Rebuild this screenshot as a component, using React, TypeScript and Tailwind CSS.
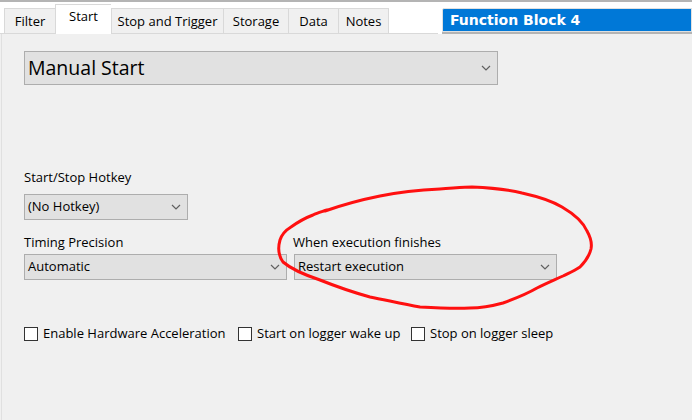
import { ReactNode } from "react";

const FONT = { fontFamily: '"Segoe UI", "Open Sans", "Noto Sans", sans-serif' };

const TABS = ["Filter", "Start", "Stop and Trigger", "Storage", "Data", "Notes"];
const TAB_W = [51, 56, 112, 65, 50, 51];

function Chevron() {
  return (
    <svg width="10" height="6" viewBox="0 0 10 6" className="shrink-0">
      <path d="M1 1 L5 5 L9 1" fill="none" stroke="#606060" strokeWidth="1.2" />
    </svg>
  );
}

function Combo({ value, className, big }: { value: string; className: string; big?: boolean }) {
  return (
    <div
      className={`flex items-center justify-between border border-[#adadad] bg-[#e1e1e1] text-black ${
        big ? "pl-[3px] pr-[6px] text-[19.5px]" : "pl-[3px] pr-[6px] text-[13px]"
      } ${className}`}
    >
      <span>{value}</span>
      <Chevron />
    </div>
  );
}

function Check({ children, className }: { children: ReactNode; className?: string }) {
  return (
    <label className={`flex items-center gap-[5px] text-[13px] text-black ${className ?? ""}`}>
      <span className="w-[14px] h-[14px] border border-[#333] bg-white shrink-0" />
      {children}
    </label>
  );
}

export default function App() {
  return (
    <div className="relative w-[692px] h-[420px] bg-[#f0f0f0] overflow-hidden" style={FONT}>
      {/* Header: tabs + title */}
      <div className="flex h-[34px] border-t-2 border-[#b4b4b4] bg-white">
        <div className="w-[438px] flex items-end pl-[4px] border-b border-[#d9d9d9]">
          {TABS.map((t, i) =>
            t === "Start" ? (
              <div
                key={t}
                style={{ width: TAB_W[i] }}
                className="-mb-px h-[30px] bg-white border-l border-t border-[#d9d9d9] flex justify-center pt-[2px] text-[13px] text-black"
              >
                {t}
              </div>
            ) : (
              <div
                key={t}
                style={{ width: TAB_W[i] }}
                className={`h-[25px] bg-[#f0f0f0] border-l border-t border-[#d9d9d9] flex justify-center pt-[3px] text-[13px] text-black ${
                  i === TABS.length - 1 ? "border-r" : ""
                }`}
              >
                {t}
              </div>
            )
          )}
        </div>
        <div className="flex-1 ml-[4px] flex flex-col">
          <div
            className="mt-[6px] h-[24px] border border-[#e0e0e0] rounded-tl-[2px] bg-[#0078d7] pl-[7px] flex items-center text-white text-[14px] font-bold"
            style={{ fontFamily: '"DejaVu Sans", Verdana, sans-serif' }}
          >
            Function Block 4
          </div>
          <div className="flex-1 border-b-2 border-[#b4b4b4]" />
        </div>
      </div>

      {/* Body */}
      <div className="h-[386px] ml-[1px] border-l border-[#e0e0e0] pl-[22px] pt-[17px]">
        <Combo value="Manual Start" big className="w-[474px] h-[34px]" />

        <div className="mt-[84px] text-[13px] text-black leading-[16px]">Start/Stop Hotkey</div>
        <Combo value="(No Hotkey)" className="mt-[9px] w-[164px] h-[26px]" />

        <div className="mt-[14px] flex gap-[7px]">
          <div>
            <div className="text-[13px] text-black leading-[16px]">Timing Precision</div>
            <Combo value="Automatic" className="mt-[4px] w-[263px] h-[26px]" />
          </div>
          <div>
            <div className="text-[13px] text-black leading-[16px] -ml-px">When execution finishes</div>
            <Combo value="Restart execution" className="mt-[4px] w-[263px] h-[26px]" />
          </div>
        </div>

        <div className="mt-[44px] flex">
          <Check className="w-[214px]">Enable Hardware Acceleration</Check>
          <Check className="w-[173px]">Start on logger wake up</Check>
          <Check>Stop on logger sleep</Check>
        </div>
      </div>

      {/* Hand-drawn red annotation */}
      <svg className="absolute inset-0 pointer-events-none" width="692" height="420">
        <path
          d="M325 211 C345 204 365 199 380 196 C400 192 420 190 440 189 C455 188 465 187 472 187 C495 188 510 190 522 193 C540 197 552 201 562 207 C574 214 583 222 587 231 C591 238 592 244 591 249 C589 257 585 262 580 267 C574 271 569 273 563 276 C552 281 545 284 537 288 C525 295 514 299 503 303 C492 306 482 308 470 308 C455 309 437 308 420 307 C402 304 386 300 370 297 C352 292 335 286 320 280 C302 274 290 268 283 262 C278 255 278 247 280 240 C282 234 286 230 291 227 C298 222 305 218 313 215 C317 213 321 212 327 210"
          fill="none"
          stroke="#ff1010"
          strokeWidth="3"
          strokeLinecap="round"
          strokeLinejoin="round"
        />
      </svg>
    </div>
  );
}
